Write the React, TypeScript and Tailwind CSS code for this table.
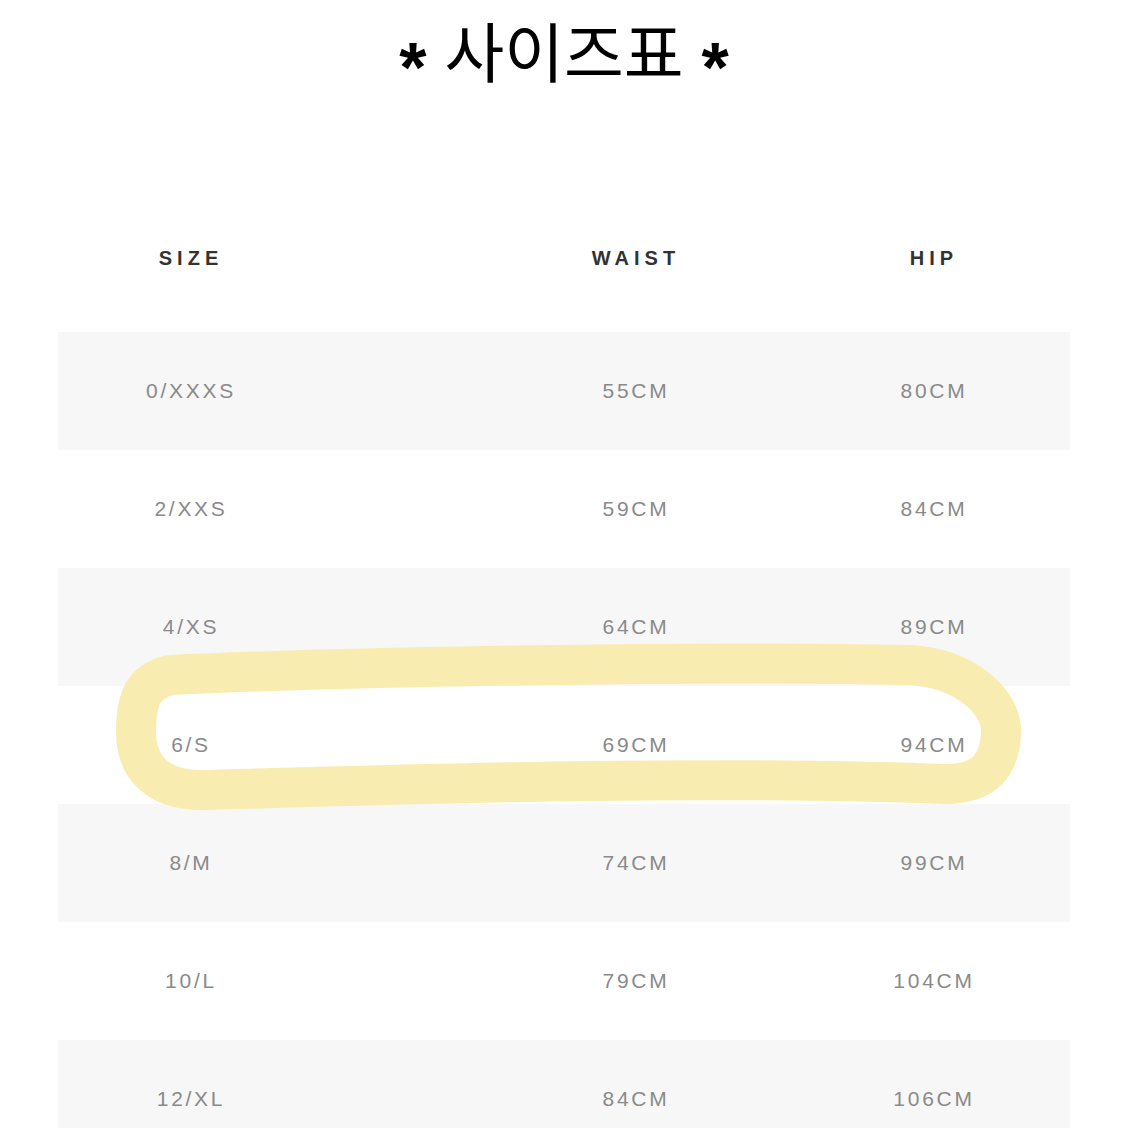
const rows = [
  { size: "0/XXXS", waist: "55CM", hip: "80CM" },
  { size: "2/XXS", waist: "59CM", hip: "84CM" },
  { size: "4/XS", waist: "64CM", hip: "89CM" },
  { size: "6/S", waist: "69CM", hip: "94CM" },
  { size: "8/M", waist: "74CM", hip: "99CM" },
  { size: "10/L", waist: "79CM", hip: "104CM" },
  { size: "12/XL", waist: "84CM", hip: "106CM" },
];

function Highlight() {
  return (
    <svg className="pointer-events-none absolute left-0 top-0" width="1128" height="1128" viewBox="0 0 1128 1128">
      <path
        d="M 170 675 C 320 668, 700 660, 910 665 C 965 668, 1002 702, 1001 732 C 1000 765, 985 784, 945 784 C 700 775, 420 784, 205 790 C 155 791, 136 765, 136 732 C 136 700, 142 682, 170 675 Z"
        fill="none"
        stroke="#f9ecb1"
        strokeWidth="40"
        strokeLinejoin="round"
      />
    </svg>
  );
}

export default function App() {
  return (
    <div className="relative h-[1128px] w-[1128px] overflow-hidden bg-white" style={{ fontFamily: '"Liberation Sans", "Noto Sans CJK KR", sans-serif' }}>
      <h1 className="flex h-[104px] items-center justify-center gap-[18px] text-[65px] font-normal text-black" style={{ fontFamily: '"Noto Sans CJK KR", sans-serif' }}>
        <span className="translate-y-[16px] text-[70px] font-bold" style={{ fontFamily: '"Liberation Sans", sans-serif' }}>*</span>
        <span className="-translate-y-[2px]">사이즈표</span>
        <span className="translate-y-[16px] text-[70px] font-bold" style={{ fontFamily: '"Liberation Sans", sans-serif' }}>*</span>
      </h1>

      <div className="mx-[58px] mt-[108px]">
        <div className="flex h-[92px] items-center text-[20px] font-bold tracking-[0.25em] text-[#333]">
          <div className="w-[266px] text-center">SIZE</div>
          <div className="ml-[134px] w-[356px] text-center">WAIST</div>
          <div className="w-[240px] text-center">HIP</div>
        </div>
        <div className="mt-[28px]">
          {rows.map((r, i) => (
            <div
              key={r.size}
              className={`flex h-[118px] items-center text-[21px] tracking-[0.13em] text-[#8a8a8a] ${i % 2 === 0 ? "bg-[#f7f7f7]" : "bg-white"}`}
            >
              <div className="w-[266px] text-center">{r.size}</div>
              <div className="ml-[134px] w-[356px] text-center">{r.waist}</div>
              <div className="w-[240px] text-center">{r.hip}</div>
            </div>
          ))}
        </div>
      </div>

      <Highlight />
    </div>
  );
}
